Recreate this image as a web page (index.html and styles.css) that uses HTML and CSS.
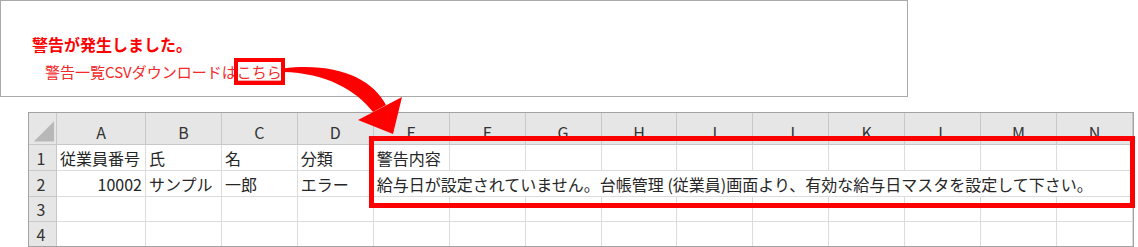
FILE: index.html
```html
<!DOCTYPE html>
<html lang="ja">
<head>
<meta charset="utf-8">
<title>警告</title>
<link rel="stylesheet" href="styles.css">
</head>
<body>
<div class="page">
  <div class="notice">
    <p class="title">警告が発生しました。</p>
    <p class="msg">警告一覧CSVダウンロードは<a class="link" href="#">こちら</a></p>
  </div>

  <div class="sheet">
    <div class="grid">
      <div class="hd corner"><svg class="tri" width="28" height="32" viewBox="0 0 28 32"><polygon points="5,29 26,29 26,8" fill="#b8b8b8"/></svg></div>
      <div class="hd col">A</div>
      <div class="hd col">B</div>
      <div class="hd col">C</div>
      <div class="hd col">D</div>
      <div class="hd col">E</div>
      <div class="hd col">F</div>
      <div class="hd col">G</div>
      <div class="hd col">H</div>
      <div class="hd col">I</div>
      <div class="hd col">J</div>
      <div class="hd col">K</div>
      <div class="hd col">L</div>
      <div class="hd col">M</div>
      <div class="hd col">N</div>

      <div class="hd row">1</div>
      <div class="cell">従業員番号</div>
      <div class="cell">氏</div>
      <div class="cell">名</div>
      <div class="cell">分類</div>
      <div class="cell">警告内容</div>
      <div class="cell"></div>
      <div class="cell"></div>
      <div class="cell"></div>
      <div class="cell"></div>
      <div class="cell"></div>
      <div class="cell"></div>
      <div class="cell"></div>
      <div class="cell"></div>
      <div class="cell"></div>

      <div class="hd row">2</div>
      <div class="cell num">10002</div>
      <div class="cell">サンプル</div>
      <div class="cell">一郎</div>
      <div class="cell">エラー</div>
      <div class="cell span">給与日が設定されていません。台帳管理 (従業員)画面より、有効な給与日マスタを設定して下さい。</div>

      <div class="hd row">3</div>
      <div class="cell"></div><div class="cell"></div><div class="cell"></div><div class="cell"></div><div class="cell"></div>
      <div class="cell"></div><div class="cell"></div><div class="cell"></div><div class="cell"></div><div class="cell"></div>
      <div class="cell"></div><div class="cell"></div><div class="cell"></div><div class="cell"></div>

      <div class="hd row">4</div>
      <div class="cell"></div><div class="cell"></div><div class="cell"></div><div class="cell"></div><div class="cell"></div>
      <div class="cell"></div><div class="cell"></div><div class="cell"></div><div class="cell"></div><div class="cell"></div>
      <div class="cell"></div><div class="cell"></div><div class="cell"></div><div class="cell"></div>
    </div>
  </div>

  <div class="highlight"></div>

  <svg class="arrow" width="1138" height="247" viewBox="0 0 1138 247">
    <path d="M283,68.5 C335,62 372,78 386,105 L373,112 C356,90 326,73 283,72 Z" fill="#ff0000"/>
    <polygon points="358,120 402,97 393,134" fill="#ff0000"/>
  </svg>
</div>
</body>
</html>
```

FILE: styles.css
```css
* {
  box-sizing: border-box;
}

html, body {
  margin: 0;
  padding: 0;
  background: #ffffff;
}

body {
  font-family: "Noto Sans CJK JP", "Noto Sans", sans-serif;
  width: 1138px;
  height: 247px;
  overflow: hidden;
}

.page {
  position: relative;
  width: 1138px;
  height: 247px;
}

.notice {
  width: 908px;
  height: 97px;
  border: 1px solid #a9a9a9;
  padding: 33px 0 0 31px;
}

.title {
  margin: 0;
  font-size: 16px;
  line-height: 20px;
  font-weight: bold;
  color: #ff0000;
}

.msg {
  margin: 8px 0 0 13px;
  font-size: 15px;
  line-height: 20px;
  color: #f22a2a;
}

.link {
  color: #f22a2a;
  text-decoration: underline;
  text-decoration-color: #f0a8a8;
  text-underline-offset: 2px;
  outline: 4px solid #ff0000;
  outline-offset: -1px;
}

.sheet {
  margin: 15px 0 0 28px;
  width: 1106px;
  height: 135px;
  border: 1px solid #a3a3a3;
  overflow: hidden;
}

.grid {
  display: grid;
  grid-template-columns: 28px 89px repeat(13, 1fr);
  grid-template-rows: 32px 26px 26px 25px 25px;
  font-size: 16px;
  color: #262626;
}

.hd {
  background: #e6e6e6;
  color: #333333;
  border-right: 1px solid #c8c8c8;
  border-bottom: 1px solid #c8c8c8;
  display: flex;
  align-items: center;
  justify-content: center;
}

.corner {
  position: relative;
}

.tri {
  display: block;
}

.col {
  padding-top: 6px;
  font-size: 16px;
}

.row {
  font-size: 16px;
  padding-right: 3px;
}

.cell {
  border-right: 1px solid #dcdcdc;
  border-bottom: 1px solid #dcdcdc;
  padding: 0 3px;
  display: flex;
  align-items: center;
  white-space: nowrap;
  line-height: 1;
}

.num {
  justify-content: flex-end;
}

.span {
  grid-column: 6 / -1;
}

.highlight {
  position: absolute;
  left: 369px;
  top: 136px;
  width: 766px;
  height: 72px;
  border: 5px solid #ff0000;
}

.arrow {
  position: absolute;
  left: 0;
  top: 0;
  pointer-events: none;
}
```
